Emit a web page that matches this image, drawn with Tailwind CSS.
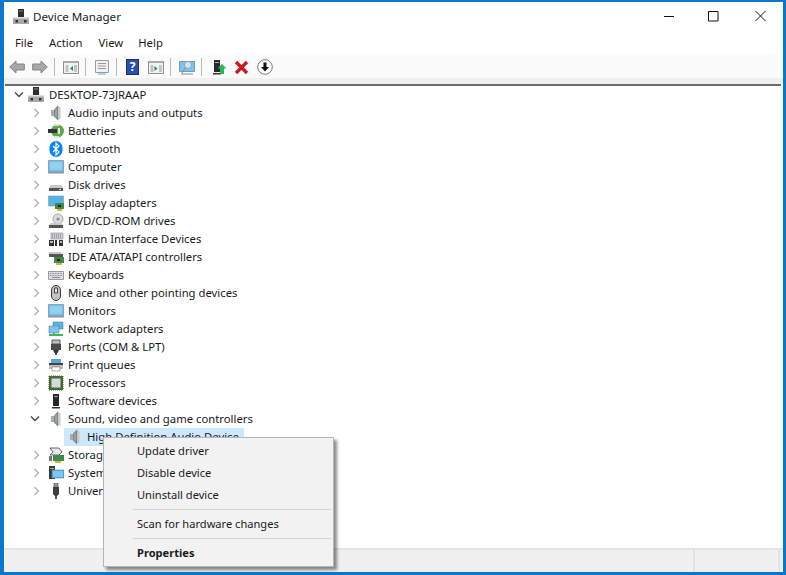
<!DOCTYPE html>
<html>
<head>
<meta charset="utf-8">
<script src="https://cdn.jsdelivr.net/npm/@tailwindcss/browser@4"></script>
</head>
<body class="w-[786px] h-[575px] overflow-hidden bg-[#0a78c8] font-['Noto_Sans','Open_Sans',sans-serif] text-[11.3px] text-[#1a1a1a]">
<svg class="hidden">
  <symbol id="spk" viewBox="0 0 16 16"><path d="M3 5h3v6H3z" fill="#a8aeae"/><path d="M6 4.500L10 .5v15l-4-4z" fill="#7f8686"/><path d="M10 .5l2.500 2v11l-2.500 2z" fill="#c4c9c9"/><path d="M8 4v8" stroke="#b9bebe"/></symbol>
  <symbol id="pc" viewBox="0 0 16 16"><path d="M5 0h6v8H5z" fill="#2e2e2e"/><path d="M6.500 1.500h1v1h-1zM8.500 1.500h1v1h-1z" fill="#ddd"/><path d="M0 8h16v7H0z" fill="#a9a9a9"/><path d="M0 8h16v1.500H0z" fill="#e2e2e2"/><path d="M2.500 11h2.500v2.500H2.500zM11 11h2.500v2.500H11z" fill="#333"/></symbol>
  <symbol id="screen" viewBox="0 0 16 16"><path d="M.500 1.500h15v11H.500z" fill="#4fb0ea" stroke="#7d99ad" stroke-width=".8"/><path d="M1.500 2.500h13v9h-13z" fill="#8fd0f5"/><path d="M0 13h16v1.500H0z" fill="#8a9aa5"/></symbol>
  <symbol id="chev" viewBox="0 0 8 10"><path d="M1.500 1l4 4-4 4" fill="none" stroke="#b0b0b0" stroke-width="1.300"/></symbol>
</svg>

<div class="ml-[4px] mr-[3px] mt-[2px] h-[570px] flex flex-col bg-white">
  <!-- title bar -->
  <div class="h-[31px] shrink-0 flex items-center pl-[9px] pb-[1px]">
    <svg class="w-[16px] h-[16px]"><use href="#pc"/></svg>
    <span class="ml-[4px] text-[11.6px] leading-none text-[#222]">Device Manager</span>
    <div class="ml-auto flex items-center mb-[2px]">
      <svg class="w-[46px] h-[12px]" viewBox="0 0 46 12"><path d="M19 6.500h10" stroke="#111" stroke-width="1"/></svg>
      <svg class="w-[46px] h-[12px]" viewBox="0 0 46 12"><path d="M17.500 1.500h9.500v9.500h-9.500z" fill="none" stroke="#111" stroke-width="1"/></svg>
      <svg class="w-[46px] h-[12px]" viewBox="0 0 46 12"><path d="M18.500 1l10 10M28.500 1l-10 10" fill="none" stroke="#111" stroke-width="1"/></svg>
    </div>
  </div>
  <!-- menu -->
  <div class="h-[21px] shrink-0 flex items-center border-b border-[#b4b4b4] box-content pb-[2px] -mb-[2px]">
    <span class="ml-[11px]">File</span>
    <span class="ml-[16px]">Action</span>
    <span class="ml-[16px]">View</span>
    <span class="ml-[15px]">Help</span>
  </div>
  <!-- toolbar -->
  <div class="h-[23px] shrink-0 flex items-center bg-[#fbfbfb] pt-px">
    <svg class="ml-[5px] w-[16px] h-[14px]" viewBox="0 0 16 14"><path d="M.700 7l6.300-6v3h8.300v6H7v3z" fill="#a8a8a8" stroke="#848484"/></svg>
    <svg class="ml-[7px] w-[16px] h-[14px]" viewBox="0 0 16 14"><path d="M15.300 7L9 1v3H.700v6H9v3z" fill="#a8a8a8" stroke="#848484"/></svg>
    <div class="ml-[6px] w-px h-[18px] bg-[#b9b9b9]"></div>
    <svg class="ml-[8px] w-[16px] h-[14px]" viewBox="0 0 16 14"><path d="M.500 1.500h15v12H.500z" fill="#f3f3f3" stroke="#8f8f8f"/><path d="M1 1h14v2H1z" fill="#aaa"/><path d="M2.500 5h3v7h-3zM11 5h3v7h-3z" fill="#c4c4c4"/><path d="M10 6v5L7 8.500z" fill="#2a8a3c"/></svg>
    <div class="ml-[6px] w-px h-[18px] bg-[#b9b9b9]"></div>
    <svg class="ml-[8px] w-[16px] h-[16px]" viewBox="0 0 16 16"><path d="M1.500 1.500h13v12h-13z" fill="#f1f1f1" stroke="#9b9b9b"/><path d="M4 4.500h8M4 7h8M4 9.500h8" stroke="#9a9a9a"/><path d="M4 15h8" stroke="#8fc8ee" stroke-width="1.500"/></svg>
    <div class="ml-[6px] w-px h-[18px] bg-[#b9b9b9]"></div>
    <div class="ml-[9px] w-[13px] h-[16px] bg-[#2d4fb0] border border-[#1b2f77] text-white font-bold text-[12px] leading-[14px] text-center">?</div>
    <svg class="ml-[9px] w-[16px] h-[14px]" viewBox="0 0 16 14"><path d="M.500 1.500h15v12H.500z" fill="#f3f3f3" stroke="#8f8f8f"/><path d="M1 1h14v2H1z" fill="#aaa"/><path d="M2.500 5h3v7h-3zM11 5h3v7h-3z" fill="#c4c4c4"/><path d="M6.500 6v5l3-2.500z" fill="#2a8a3c"/></svg>
    <div class="ml-[6px] w-px h-[18px] bg-[#b9b9b9]"></div>
    <svg class="ml-[8px] w-[16px] h-[16px]" viewBox="0 0 16 16"><path d="M.500 2.500h15v10H.500z" fill="#7cc3ee" stroke="#7d99ad"/><circle cx="9" cy="6" r="3.500" fill="#cfe6f5" stroke="#88a8bd"/><path d="M6.500 8.500L3 14M2 15h12" stroke="#7d8d98"/></svg>
    <div class="ml-[6px] w-px h-[18px] bg-[#b9b9b9]"></div>
    <svg class="ml-[11px] w-[14px] h-[16px]" viewBox="0 0 14 16"><path d="M1 1h6v12H1z" fill="#2a2a2a"/><path d="M2 3h4v1H2z" fill="#aaa"/><path d="M0 14h8v1.500H0z" fill="#333"/><path d="M9 5l4.500 4.500H11V15H7V9.500H4.500z" fill="#2fb457"/></svg>
    <svg class="ml-[7px] w-[15px] h-[15px]" viewBox="0 0 15 15"><path d="M2 2l11 11M13 2L2 13" stroke="#d2141e" stroke-width="3.200"/></svg>
    <svg class="ml-[8px] w-[16px] h-[16px]" viewBox="0 0 16 16"><circle cx="8" cy="8" r="7.300" fill="#fff" stroke="#777"/><path d="M6.500 3.500h3V8H12l-4 4.500L4 8h2.500z" fill="#111"/></svg>
  </div>
  <!-- grey band -->
  <div class="h-[6px] shrink-0 bg-[#f0f0f0]"></div>
  <!-- tree -->
  <div class="h-[464px] shrink-0 ml-px mr-[2px] border-t-2 border-[#6d6d6d] bg-white">
    <div class="h-[18px] flex items-center pl-[7px]">
      <svg class="ml-[2px] w-[10px] h-[8px]" viewBox="0 0 10 8"><path d="M1 1.500l4 4 4-4" fill="none" stroke="#444" stroke-width="1.300"/></svg>
      <svg class="ml-[4px] w-[16px] h-[16px]"><use href="#pc"/></svg>
      <span class="ml-[5px]">DESKTOP-73JRAAP</span>
    </div>
    <div class="pl-[28px]">
      <div class="h-[18px] flex items-center"><svg class="w-[8px] h-[10px]"><use href="#chev"/></svg><svg class="ml-[7px] w-[16px] h-[16px]"><use href="#spk"/></svg><span class="ml-[4px]">Audio inputs and outputs</span></div>
      <div class="h-[18px] flex items-center"><svg class="w-[8px] h-[10px]"><use href="#chev"/></svg><svg class="ml-[7px] w-[16px] h-[16px]" viewBox="0 0 16 16"><circle cx="9.500" cy="8" r="6.500" fill="#5da84a"/><path d="M0 6h9v4H0z" fill="#333"/><path d="M6 2h5M6 14h5" stroke="#ddd" stroke-width="2"/><path d="M11 5v6" stroke="#e6e6e6" stroke-width="2"/></svg><span class="ml-[4px]">Batteries</span></div>
      <div class="h-[18px] flex items-center"><svg class="w-[8px] h-[10px]"><use href="#chev"/></svg><svg class="ml-[7px] w-[16px] h-[16px]" viewBox="0 0 16 16"><rect x="1.500" y="0" width="13" height="16" rx="6.500" fill="#0a84ec"/><path d="M5 5l6 6-3 3V2l3 3-6 6" fill="none" stroke="#fff" stroke-width="1.200"/></svg><span class="ml-[4px]">Bluetooth</span></div>
      <div class="h-[18px] flex items-center"><svg class="w-[8px] h-[10px]"><use href="#chev"/></svg><svg class="ml-[7px] w-[16px] h-[16px]"><use href="#screen"/></svg><span class="ml-[4px]">Computer</span></div>
      <div class="h-[18px] flex items-center"><svg class="w-[8px] h-[10px]"><use href="#chev"/></svg><svg class="ml-[7px] w-[16px] h-[16px]" viewBox="0 0 16 16"><path d="M3 8h10l2 3H1z" fill="#c8c8c8"/><path d="M1 11h14v3H1z" fill="#555"/><path d="M11 12h2v1h-2z" fill="#ddd"/></svg><span class="ml-[4px]">Disk drives</span></div>
      <div class="h-[18px] flex items-center"><svg class="w-[8px] h-[10px]"><use href="#chev"/></svg><svg class="ml-[7px] w-[16px] h-[16px]" viewBox="0 0 16 16"><path d="M.500 1h15v10H.500z" fill="#58b2ea" stroke="#7d99ad" stroke-width=".6"/><path d="M7 8h9v6H7z" fill="#3f8a4a"/><path d="M9 14v2h5v-2" fill="#d9b43c"/><path d="M10 10h3v2h-3z" fill="#222"/></svg><span class="ml-[4px]">Display adapters</span></div>
      <div class="h-[18px] flex items-center"><svg class="w-[8px] h-[10px]"><use href="#chev"/></svg><svg class="ml-[7px] w-[16px] h-[16px]" viewBox="0 0 16 16"><circle cx="10" cy="6" r="5" fill="#dcdcdc" stroke="#aaa"/><circle cx="10" cy="6" r="1.500" fill="#888"/><path d="M3 10h10l2 2H1z" fill="#c8c8c8"/><path d="M1 12h14v3H1z" fill="#555"/></svg><span class="ml-[4px]">DVD/CD-ROM drives</span></div>
      <div class="h-[18px] flex items-center"><svg class="w-[8px] h-[10px]"><use href="#chev"/></svg><svg class="ml-[7px] w-[16px] h-[16px]" viewBox="0 0 16 16"><path d="M3 2h12v6H3z" fill="#ccd0d4" stroke="#888" stroke-width=".6"/><path d="M4 4h10M4 6h10" stroke="#777" stroke-dasharray="1 1"/><path d="M1 9h5v6H1zM7 9h2v6H7zM11 9h4v6h-4z" fill="#333"/><path d="M2 10h3v2H2zM12 10h2v2h-2z" fill="#bbb"/></svg><span class="ml-[4px]">Human Interface Devices</span></div>
      <div class="h-[18px] flex items-center"><svg class="w-[8px] h-[10px]"><use href="#chev"/></svg><svg class="ml-[7px] w-[16px] h-[16px]" viewBox="0 0 16 16"><path d="M1 3h12l2 3H1z" fill="#c8c8c8"/><path d="M1 5h14v3H1z" fill="#555"/><path d="M6 8h10v6H6z" fill="#3f8a4a"/><path d="M8 14v2h6v-2" fill="#d9b43c"/><path d="M9 10h3v2H9z" fill="#222"/></svg><span class="ml-[4px]">IDE ATA/ATAPI controllers</span></div>
      <div class="h-[18px] flex items-center"><svg class="w-[8px] h-[10px]"><use href="#chev"/></svg><svg class="ml-[7px] w-[16px] h-[16px]" viewBox="0 0 16 16"><path d="M.500 4.500h15v8H.500z" fill="#dcdfe2" stroke="#9a9a9a"/><path d="M2 6.500h12M2 8.500h12" stroke="#8a8a8a" stroke-dasharray="1 .6"/><path d="M4 10.500h8" stroke="#8a8a8a"/></svg><span class="ml-[4px]">Keyboards</span></div>
      <div class="h-[18px] flex items-center"><svg class="w-[8px] h-[10px]"><use href="#chev"/></svg><svg class="ml-[7px] w-[16px] h-[16px]" viewBox="0 0 16 16"><rect x="3.500" y=".5" width="9" height="15" rx="4.500" fill="#c2c2c2" stroke="#3a3a3a"/><path d="M6.500 3h3v5h-3z" fill="#e8e8e8" stroke="#444"/></svg><span class="ml-[4px]">Mice and other pointing devices</span></div>
      <div class="h-[18px] flex items-center"><svg class="w-[8px] h-[10px]"><use href="#chev"/></svg><svg class="ml-[7px] w-[16px] h-[16px]"><use href="#screen"/></svg><span class="ml-[4px]">Monitors</span></div>
      <div class="h-[18px] flex items-center"><svg class="w-[8px] h-[10px]"><use href="#chev"/></svg><svg class="ml-[7px] w-[16px] h-[16px]" viewBox="0 0 16 16"><path d="M5 1h10v7H5z" fill="#58b2ea" stroke="#5b7f96" stroke-width=".6"/><path d="M1 5h10v7H1z" fill="#7cc6f1" stroke="#5b7f96" stroke-width=".6"/><path d="M1 14h14" stroke="#3fb55b" stroke-width="2"/><path d="M6 12v2" stroke="#3fb55b" stroke-width="2"/></svg><span class="ml-[4px]">Network adapters</span></div>
      <div class="h-[18px] flex items-center"><svg class="w-[8px] h-[10px]"><use href="#chev"/></svg><svg class="ml-[7px] w-[16px] h-[16px]" viewBox="0 0 16 16"><path d="M4 1h8v4H4z" fill="#bbb" stroke="#444" stroke-width=".8"/><path d="M3 5h10v6H3z" fill="#4a4a4a"/><path d="M5 11h6l-1.500 3h-3z" fill="#333"/><path d="M7 14h2v2H7z" fill="#555"/></svg><span class="ml-[4px]">Ports (COM &amp; LPT)</span></div>
      <div class="h-[18px] flex items-center"><svg class="w-[8px] h-[10px]"><use href="#chev"/></svg><svg class="ml-[7px] w-[16px] h-[16px]" viewBox="0 0 16 16"><path d="M3 2h10v4H3z" fill="#5aa8d8"/><path d="M1 6h14v6H1z" fill="#bdbdbd"/><path d="M1 6h14v2H1z" fill="#444"/><path d="M4 10h8v4H4z" fill="#fff" stroke="#777" stroke-width=".6"/></svg><span class="ml-[4px]">Print queues</span></div>
      <div class="h-[18px] flex items-center"><svg class="w-[8px] h-[10px]"><use href="#chev"/></svg><svg class="ml-[7px] w-[16px] h-[16px]" viewBox="0 0 16 16"><path d="M1 1h14v14H1z" fill="#3e6b3f"/><path d="M3.500 3.500h9v9h-9z" fill="#d6d9d6"/><path d="M.500 1v14M15.500 1v14M1 .5h14M1 15.500h14" stroke="#c7b45a" stroke-dasharray="1 1"/></svg><span class="ml-[4px]">Processors</span></div>
      <div class="h-[18px] flex items-center"><svg class="w-[8px] h-[10px]"><use href="#chev"/></svg><svg class="ml-[7px] w-[16px] h-[16px]" viewBox="0 0 16 16"><path d="M5 1h6v12H5z" fill="#2a2a2a"/><path d="M6.500 3h3v1h-3z" fill="#bbb"/><path d="M4 14h8v1.500H4z" fill="#333"/></svg><span class="ml-[4px]">Software devices</span></div>
      <div class="h-[18px] flex items-center relative"><svg class="absolute left-[-3px] top-[5px] w-[10px] h-[8px]" viewBox="0 0 10 8"><path d="M1 1.500l4 4 4-4" fill="none" stroke="#444" stroke-width="1.300"/></svg><div class="w-[8px]"></div><svg class="ml-[7px] w-[16px] h-[16px]"><use href="#spk"/></svg><span class="ml-[4px]">Sound, video and game controllers</span></div>
      <div class="h-[18px] flex items-center pl-[31px]"><div class="flex items-center h-[18px] w-[180px] bg-[#cce8ff]"><svg class="ml-[3px] w-[16px] h-[16px]"><use href="#spk"/></svg><span class="ml-[4px] whitespace-nowrap">High Definition Audio Device</span></div></div>
      <div class="h-[18px] flex items-center"><svg class="w-[8px] h-[10px]"><use href="#chev"/></svg><svg class="ml-[7px] w-[16px] h-[16px]" viewBox="0 0 16 16"><path d="M2 1h9l3 4-3 3H2l3-3z" fill="#e6e6e6" stroke="#444" stroke-width=".8"/><path d="M5 8h11v6H5z" fill="#3f8a4a"/><path d="M7 14v2h6v-2" fill="#d9b43c"/><path d="M1 9h3v5H1z" fill="#777"/></svg><span class="ml-[4px]">Storage controllers</span></div>
      <div class="h-[18px] flex items-center"><svg class="w-[8px] h-[10px]"><use href="#chev"/></svg><svg class="ml-[7px] w-[16px] h-[16px]" viewBox="0 0 16 16"><path d="M1 1h6v13H1z" fill="#3b3b3b"/><path d="M2 3h4v1H2z" fill="#8fbc5a"/><path d="M4 5h12v8H4z" fill="#4fb0ea" stroke="#5b7f96" stroke-width=".6"/><path d="M5 6h10v6H5z" fill="#7cc6f1"/></svg><span class="ml-[4px]">System devices</span></div>
      <div class="h-[18px] flex items-center"><svg class="w-[8px] h-[10px]"><use href="#chev"/></svg><svg class="ml-[7px] w-[16px] h-[16px]" viewBox="0 0 16 16"><path d="M6 0h4v4H6z" fill="#999" stroke="#444" stroke-width=".6"/><path d="M5 4h6v7l-2 2H7l-2-2z" fill="#3c3c3c"/><path d="M7 13h2v3H7z" fill="#555"/></svg><span class="ml-[4px]">Universal Serial Bus controllers</span></div>
    </div>
  </div>
  <!-- status bar -->
  <div class="flex-1 flex bg-[#f0f0f0] border-t-2 border-[#e4e4e4]">
    <div class="w-[691px] border-r-2 border-[#e2e2e2]"></div>
    <div class="w-[85px] border-r-2 border-[#e2e2e2]"></div>
  </div>
</div>

<!-- context menu -->
<div class="absolute left-[103px] top-[437px] w-[231px] h-[130px] bg-[#f2f2f2] border border-[#b5b5b5] shadow-[3px_3px_3px_rgba(0,0,0,0.45)] flex flex-col pl-[33px] pt-[2px] text-[11.1px]">
  <div class="h-[22px] flex items-center">Update driver</div>
  <div class="h-[22px] flex items-center">Disable device</div>
  <div class="h-[22px] flex items-center">Uninstall device</div>
  <div class="mt-[3px] h-px bg-[#d2d2d2] mr-[2px] -ml-[4px]"></div>
  <div class="mt-[3px] h-[22px] flex items-center">Scan for hardware changes</div>
  <div class="mt-[3px] h-px bg-[#d2d2d2] mr-[2px] -ml-[4px]"></div>
  <div class="mt-[3px] h-[22px] flex items-center font-bold">Properties</div>
</div>
</body>
</html>
